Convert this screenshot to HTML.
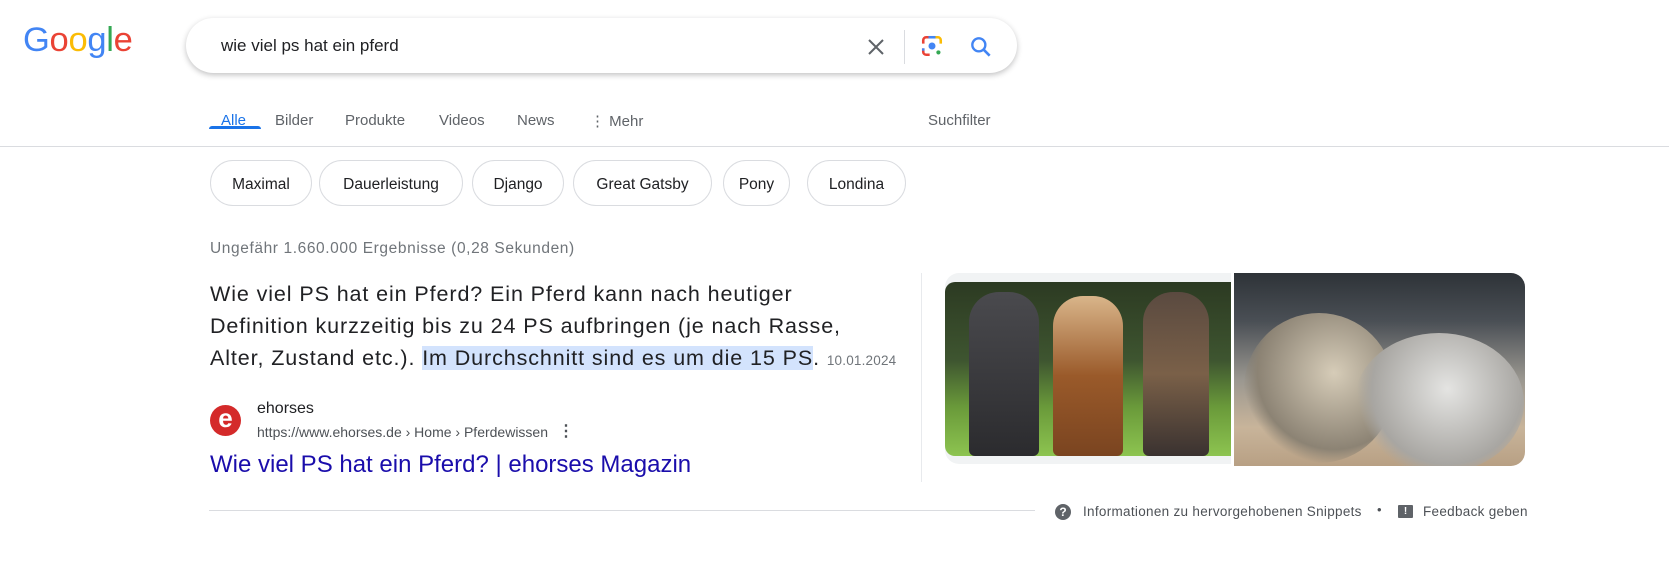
<!DOCTYPE html>
<html><head><meta charset="utf-8"><style>
*{margin:0;padding:0;box-sizing:border-box}
body{width:1669px;height:561px;background:#fff;font-family:"Liberation Sans",Arial,sans-serif;position:relative;overflow:hidden;color:#202124}
.a{position:absolute;white-space:nowrap}
.logo{left:23px;top:21px;font-size:34.5px;letter-spacing:-0.3px}
.box{left:186px;top:18px;width:831px;height:55px;border-radius:28px;box-shadow:0 2px 6px rgba(32,33,36,.28);background:#fff}
.tab{top:112px;font-size:15px;color:#5f6368}
.chip{top:160px;height:46px;border:1px solid #dadce0;border-radius:23px;font-size:15.5px;color:#202124;line-height:47px;text-align:center}
.snip{left:210px;top:278px;font-size:21.5px;line-height:32px;color:#202124;letter-spacing:0.9px}
.hl{background:#d3e3fd}
</style></head><body>
<div class="a logo"><span style="color:#4285f4">G</span><span style="color:#ea4335">o</span><span style="color:#fbbc05">o</span><span style="color:#4285f4">g</span><span style="color:#34a853">l</span><span style="color:#ea4335">e</span></div>
<div class="a box"></div>
<div class="a" style="left:221px;top:36px;font-size:17px;color:#202124">wie viel ps hat ein pferd</div>
<svg class="a" style="left:864px;top:35px" width="24" height="24" viewBox="0 0 24 24"><path d="M5 5L19 19M19 5L5 19" stroke="#5f6368" stroke-width="2"/></svg>
<div class="a" style="left:904px;top:30px;width:1px;height:34px;background:#dadce0"></div>
<svg class="a" style="left:918px;top:32px" width="28" height="28" viewBox="0 0 24 24"><path d="M9 4.5H7a2.5 2.5 0 0 0-2.5 2.5v3" stroke="#ea4335" stroke-width="2.2" fill="none"/><path d="M15 4.5h2a2.5 2.5 0 0 1 2.5 2.5v3" stroke="#fbbc05" stroke-width="2.2" fill="none"/><path d="M4.5 14v3a2.5 2.5 0 0 0 2.5 2.5h3" stroke="#ea4335" stroke-width="2.2" fill="none"/><path d="M4.5 14v2" stroke="#4285f4" stroke-width="2.2"/><path d="M9 4.5h6" stroke="#4285f4" stroke-width="2.2"/><circle cx="12" cy="12" r="3" fill="#4285f4"/><circle cx="17.5" cy="17.5" r="1.8" fill="#34a853"/></svg>
<svg class="a" style="left:968px;top:34px" width="26" height="26" viewBox="0 0 24 24"><circle cx="10" cy="10" r="6" stroke="#4285f4" stroke-width="2.2" fill="none"/><path d="M14.5 14.5L20 20" stroke="#4285f4" stroke-width="2.4"/></svg>

<div class="a tab" style="left:221px;color:#1a73e8">Alle</div>
<div class="a tab" style="left:275px">Bilder</div>
<div class="a tab" style="left:345px">Produkte</div>
<div class="a tab" style="left:439px">Videos</div>
<div class="a tab" style="left:517px">News</div>
<div class="a tab" style="left:590px">⋮ Mehr</div>
<div class="a tab" style="left:928px">Suchfilter</div>
<div class="a" style="left:209px;top:126px;width:52px;height:3px;background:#1a73e8;border-radius:3px 3px 0 0"></div>
<div class="a" style="left:0;top:146px;width:1669px;height:1px;background:#dadce0"></div>

<div class="a chip" style="left:210px;width:102px">Maximal</div>
<div class="a chip" style="left:319px;width:144px">Dauerleistung</div>
<div class="a chip" style="left:472px;width:92px">Django</div>
<div class="a chip" style="left:573px;width:139px">Great Gatsby</div>
<div class="a chip" style="left:723px;width:67px">Pony</div>
<div class="a chip" style="left:807px;width:99px">Londina</div>

<div class="a" style="left:210px;top:240px;font-size:15.5px;color:#70757a;letter-spacing:0.6px">Ungefähr 1.660.000 Ergebnisse (0,28 Sekunden)</div>
<div class="a snip">Wie viel PS hat ein Pferd? Ein Pferd kann nach heutiger<br>Definition kurzzeitig bis zu 24 PS aufbringen (je nach Rasse,<br>Alter, Zustand etc.). <span class="hl">Im Durchschnitt sind es um die 15 PS</span>. <span style="font-size:13.5px;color:#70757a;letter-spacing:0.2px">10.01.2024</span></div>

<div class="a" style="left:210px;top:405px;width:31px;height:31px;border-radius:50%;background:#d42a2a;color:#fff;font-size:26px;line-height:27px;text-align:center;font-weight:bold">e</div>
<div class="a" style="left:257px;top:400px;font-size:16px;color:#202124">ehorses</div>
<div class="a" style="left:257px;top:424px;font-size:14px;color:#4d5156">https://www.ehorses.de › Home › Pferdewissen</div>
<div class="a" style="left:558px;top:421px;font-size:16px;color:#4d5156;font-weight:bold">⋮</div>
<div class="a" style="left:210px;top:451px;font-size:24px;color:#1a0dab">Wie viel PS hat ein Pferd? | ehorses Magazin</div>

<div class="a" style="left:921px;top:273px;width:1px;height:209px;background:#e8eaed"></div>
<div class="a" style="left:945px;top:273px;width:286px;height:191px;border-radius:14px 0 0 14px;background:#f1f3f4;overflow:hidden">
 <div style="position:absolute;left:0;top:9px;width:286px;height:174px;border-radius:10px 0 0 10px;background:linear-gradient(180deg,#2c3a22 0%,#3e5530 45%,#6a9a3a 72%,#8dc450 100%)">
  <div style="position:absolute;left:24px;top:10px;width:70px;height:164px;border-radius:30px 30px 6px 6px;background:linear-gradient(180deg,#4a4a4e,#2b2b2e)"></div>
  <div style="position:absolute;left:108px;top:14px;width:70px;height:160px;border-radius:30px 30px 6px 6px;background:linear-gradient(180deg,#d9b58a,#9a5a2a 50%,#7a4420)"></div>
  <div style="position:absolute;left:198px;top:10px;width:66px;height:164px;border-radius:30px 30px 6px 6px;background:linear-gradient(180deg,#5a4a40,#7a6048 50%,#3a3230)"></div>
 </div>
</div>
<div class="a" style="left:1234px;top:273px;width:291px;height:193px;border-radius:0 14px 14px 0;background:linear-gradient(180deg,#2e3338 0%,#4a4f55 25%,#9a9790 55%,#c8b49a 80%,#b8a084 100%);overflow:hidden">
 <div style="position:absolute;left:10px;top:40px;width:150px;height:150px;border-radius:50%;background:radial-gradient(circle at 60% 40%,#d6ccb8,#8c8374 60%,rgba(80,75,70,0) 72%)"></div>
 <div style="position:absolute;left:120px;top:60px;width:170px;height:140px;border-radius:50%;background:radial-gradient(circle at 55% 40%,#e4e4e2,#a8a6a2 60%,rgba(120,115,110,0) 72%)"></div>
</div>

<div class="a" style="left:209px;top:510px;width:826px;height:1px;background:#dadce0"></div>
<div class="a" style="left:1055px;top:504px;width:16px;height:16px;border-radius:50%;background:#5f6368;color:#fff;font-size:12px;line-height:16px;text-align:center;font-weight:bold">?</div>
<div class="a" style="left:1083px;top:504px;font-size:13.5px;color:#4d5156;letter-spacing:0.3px">Informationen zu hervorgehobenen Snippets</div>
<div class="a" style="left:1377px;top:502px;font-size:13px;color:#4d5156">•</div>
<div class="a" style="left:1398px;top:505px;width:15px;height:13px;background:#5f6368;border-radius:1px;color:#fff;font-size:10px;line-height:13px;text-align:center;font-weight:bold">!</div>
<div class="a" style="left:1423px;top:504px;font-size:13.5px;color:#4d5156;letter-spacing:0.3px">Feedback geben</div>
</body></html>
